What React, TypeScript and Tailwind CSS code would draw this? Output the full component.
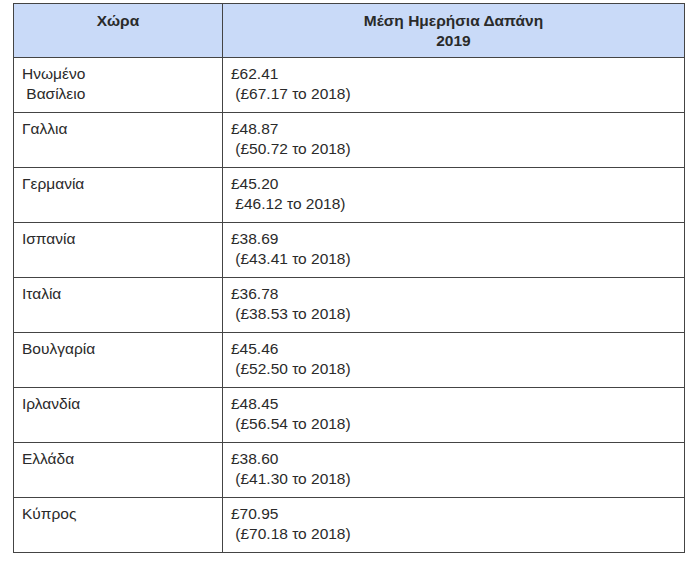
const rows: [string, string, string][] = [
  ["Ηνωμένο\n Βασίλειο", "£62.41", " (£67.17 το 2018)"],
  ["Γαλλια", "£48.87", " (£50.72 το 2018)"],
  ["Γερμανία", "£45.20", " £46.12 το 2018)"],
  ["Ισπανία", "£38.69", " (£43.41 το 2018)"],
  ["Ιταλία", "£36.78", " (£38.53 το 2018)"],
  ["Βουλγαρία", "£45.46", " (£52.50 το 2018)"],
  ["Ιρλανδία", "£48.45", " (£56.54 το 2018)"],
  ["Ελλάδα", "£38.60", " (£41.30 το 2018)"],
  ["Κύπρος", "£70.95", " (£70.18 το 2018)"],
];

export default function App() {
  return (
    <div className="w-[700px] h-[565px] bg-white pt-[3px] pl-[13px] font-['Liberation_Sans',Arial,sans-serif] text-[15.5px] text-[#2a2a2a]">
      <table className="w-[672px] border-collapse table-fixed">
        <thead>
          <tr className="h-[54px] bg-[#c9daf8]">
            <th className="w-[209px] border border-[#444] align-top pt-[7px] font-bold leading-[20px]">
              Χώρα
            </th>
            <th className="border border-[#444] align-top pt-[7px] font-bold leading-[20px]">
              Μέση Ημερήσια Δαπάνη
              <br />
              2019
            </th>
          </tr>
        </thead>
        <tbody>
          {rows.map(([country, value, prev], i) => (
            <tr key={i} className="h-[55px]">
              <td className="border border-[#444] align-top pt-[6px] pl-[8px] leading-[20px] whitespace-pre">
                {country}
              </td>
              <td className="border border-[#444] align-top pt-[6px] pl-[8px] leading-[20px] whitespace-pre">
                {value}
                {"\n"}
                {prev}
              </td>
            </tr>
          ))}
        </tbody>
      </table>
    </div>
  );
}
